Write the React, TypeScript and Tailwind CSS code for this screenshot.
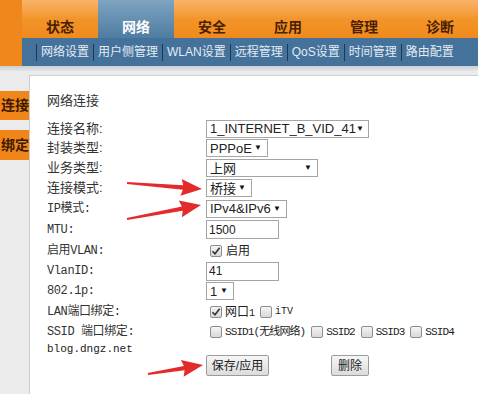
import React from 'react';

const tabs = ['状态', '网络', '安全', '应用', '管理', '诊断'];
const subs = ['网络设置', '用户侧管理', 'WLAN设置', '远程管理', 'QoS设置', '时间管理', '路由配置'];

const cjk = "font-['Liberation_Sans','Noto_Sans_CJK_SC',sans-serif]";
const mono = "font-['Liberation_Mono','Noto_Sans_CJK_SC',monospace]";

function arrow(tail: [number, number], tip: [number, number]) {
  const [x1, y1] = tail;
  const [x2, y2] = tip;
  const len = Math.hypot(x2 - x1, y2 - y1);
  const ux = (x2 - x1) / len;
  const uy = (y2 - y1) / len;
  const nx = -uy;
  const ny = ux;
  const hl = 19;
  const bx = x2 - ux * hl;
  const by = y2 - uy * hl;
  const p = (x: number, y: number) => `${x.toFixed(1)},${y.toFixed(1)}`;
  return [
    p(x1 + nx * 1, y1 + ny * 1),
    p(bx + nx * 2.2, by + ny * 2.2),
    p(bx - ux * 2 + nx * 8.5, by - uy * 2 + ny * 8.5),
    p(x2, y2),
    p(bx - ux * 2 - nx * 8.5, by - uy * 2 - ny * 8.5),
    p(bx - nx * 2.2, by - ny * 2.2),
    p(x1 - nx * 1, y1 - ny * 1),
  ].join(' ');
}

function Select({ text, w }: { text: string; w: string }) {
  return (
    <div className={`${w} h-[18px] border border-[#a5a5a5] bg-white flex items-center justify-between pl-[3px] pr-[5px] text-[13px] text-[#222] ${cjk}`}>
      <span className="leading-none">{text}</span>
      <span className="text-[8px] leading-none text-[#111]">▼</span>
    </div>
  );
}

function Input({ text }: { text: string }) {
  return (
    <div className={`w-[73px] h-[19px] border border-[#a5a5a5] bg-white flex items-center pl-[2px] text-[12px] text-[#222] ${cjk}`}>
      {text}
    </div>
  );
}

function Check({ on }: { on?: boolean }) {
  return (
    <span className="w-[12px] h-[12px] border border-[#8e8e8e] rounded-[2px] bg-gradient-to-b from-[#f4f4f4] to-[#d8d8d8] flex items-center justify-center shrink-0">
      {on && (
        <svg width="10" height="10" viewBox="0 0 10 10">
          <path d="M1.5 5.2 L4 7.8 L8.6 1.8" fill="none" stroke="#333" strokeWidth="1.6" />
        </svg>
      )}
    </span>
  );
}

function Row({ label, h, big, children }: { label: string; h: string; big?: boolean; children: React.ReactNode }) {
  return (
    <div className={`flex items-center ${h}`}>
      <div className={`w-[159px] text-[#333] ${big ? `text-[13px] ${cjk}` : `text-[12px] ${mono} tracking-[-0.4px]`}`}>{label}</div>
      <div className="flex items-center">{children}</div>
    </div>
  );
}

export default function App() {
  return (
    <div className="relative w-[478px] h-[394px] overflow-hidden bg-[#ebebeb]">
      <div className="flex h-[66px]">
        <div className="w-[30px] bg-[#ef871c]" />
        <div className="flex-1 flex flex-col">
          <div className="h-[38px] flex bg-gradient-to-b from-[#f8b466] via-[#f39428] to-[#f08a1d]">
            {tabs.map((t, i) => (
              <div
                key={t}
                className={`w-[76px] shrink-0 flex items-center justify-center pt-[16px] text-[14px] font-bold ${cjk} ${
                  i === 1 ? 'bg-gradient-to-b from-[#7fa3c0] to-[#4d7da2] text-white' : 'text-[#4a1f00]'
                }`}
              >
                {t}
              </div>
            ))}
          </div>
          <div className={`h-[28px] bg-[#44729a] flex items-center pl-[10px] text-[12px] text-[#e3ebf3] whitespace-nowrap ${cjk}`}>
            {subs.map((s) => (
              <React.Fragment key={s}>
                <span className="w-px h-[17px] bg-[#1d3850] mx-[4px] shrink-0" />
                <span className="leading-none shrink-0">{s}</span>
              </React.Fragment>
            ))}
          </div>
        </div>
      </div>
      <div className="h-[5px] bg-gradient-to-b from-[#c9cfd5] to-[#e4e6e8]" />

      <div className="flex h-[323px]">
        <div className={`w-[29px] pt-[20px] flex flex-col gap-[10px] text-[14px] font-bold text-[#3a1a00] ${cjk}`}>
          <div className="h-[29px] bg-[#f08519] flex items-center justify-end overflow-hidden">连接</div>
          <div className="h-[30px] bg-[#f08519] flex items-center justify-end overflow-hidden">绑定</div>
        </div>
        <div className="flex-1 mt-[4px] bg-white border-l border-t border-[#cfcfcf] pl-[17px] pt-[15px]">
          <div className={`h-[18px] text-[13px] text-[#333] ${cjk}`}>网络连接</div>
          <div className="mt-[10px]">
            <Row label="连接名称:" h="h-[19px]" big>
              <Select text="1_INTERNET_B_VID_41" w="w-[163px]" />
            </Row>
            <Row label="封装类型:" h="h-[20px]" big>
              <Select text="PPPoE" w="w-[62px]" />
            </Row>
            <Row label="业务类型:" h="h-[20px]" big>
              <Select text="上网" w="w-[112px]" />
            </Row>
            <Row label="连接模式:" h="h-[20px]" big>
              <Select text="桥接" w="w-[46px]" />
            </Row>
            <Row label="IP模式:" h="h-[21px]">
              <Select text="IPv4&IPv6" w="w-[81px]" />
            </Row>
            <Row label="MTU:" h="h-[21px]">
              <Input text="1500" />
            </Row>
            <Row label="启用VLAN:" h="h-[21px]">
              <span className="ml-[4px] flex items-center gap-[4px]">
                <Check on />
                <span className={`text-[12px] text-[#222] ${cjk}`}>启用</span>
              </span>
            </Row>
            <Row label="VlanID:" h="h-[20px]">
              <Input text="41" />
            </Row>
            <Row label="802.1p:" h="h-[20px]">
              <Select text="1" w="w-[28px]" />
            </Row>
            <Row label="LAN端口绑定:" h="h-[21px]">
              <span className={`ml-[4px] flex items-center gap-[3px] text-[12px] text-[#222] ${cjk}`}>
                <Check on />
                <span>网口<span className={`${mono} text-[10px]`}>1</span></span>
                <span className="ml-[2px]"><Check /></span>
                <span className={`${mono} text-[10px]`}>iTV</span>
              </span>
            </Row>
            <Row label="SSID 端口绑定:" h="h-[20px]">
              <span className={`ml-[4px] flex items-center gap-[3px] text-[11px] text-[#222] ${mono} tracking-[-0.9px]`}>
                <Check />
                <span>SSID1(无线网络)</span>
                <span className="ml-[3px]"><Check /></span>
                <span>SSID2</span>
                <span className="ml-[3px]"><Check /></span>
                <span>SSID3</span>
                <span className="ml-[3px]"><Check /></span>
                <span>SSID4</span>
              </span>
            </Row>
            <div className={`h-[15px] flex items-center text-[11px] text-[#222] ${mono}`}>blog.dngz.net</div>
            <div className="flex pl-[159px] gap-[62px] mt-[-2px]">
              <button className={`w-[63px] h-[21px] border border-[#9c9c9c] rounded-[2px] bg-gradient-to-b from-[#f6f6f6] to-[#dcdcdc] text-[12px] text-[#222] ${cjk}`}>
                保存/应用
              </button>
              <button className={`w-[38px] h-[21px] border border-[#9c9c9c] rounded-[2px] bg-gradient-to-b from-[#f6f6f6] to-[#dcdcdc] text-[12px] text-[#222] ${cjk}`}>
                删除
              </button>
            </div>
          </div>
        </div>
      </div>

      <svg className="absolute inset-0 pointer-events-none" width="478" height="394">
        <polygon points={arrow([127, 183], [202, 189])} fill="#e42b2b" />
        <polygon points={arrow([127, 219], [201, 205])} fill="#e42b2b" />
        <polygon points={arrow([148, 374], [203, 365])} fill="#e42b2b" />
      </svg>
    </div>
  );
}
